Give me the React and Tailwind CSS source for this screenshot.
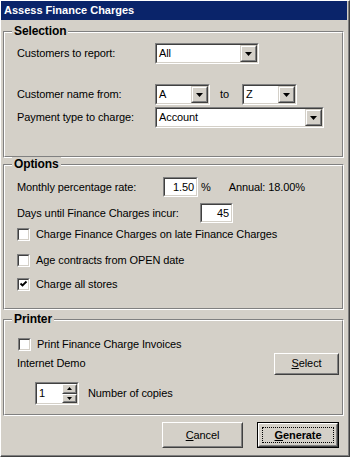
import React from "react";

// classic win2k bevels
const Sunken = ({ className = "", inner = "bg-white", children }) => (
  <div className={`border border-t-[#808080] border-l-[#808080] border-r-white border-b-white ${className}`}>
    <div className={`h-full w-full border border-t-[#404040] border-l-[#404040] border-r-[#d4d0c8] border-b-[#d4d0c8] ${inner}`}>
      {children}
    </div>
  </div>
);

const Raised = ({ className = "", combo = false, children }) => (
  <div
    className={`bg-[#d4d0c8] border border-r-[#404040] border-b-[#404040] ${
      combo ? "border-t-[#d4d0c8] border-l-[#d4d0c8]" : "border-t-white border-l-white"
    } ${className}`}
  >
    <div
      className={`h-full w-full flex items-center justify-center border border-r-[#808080] border-b-[#808080] ${
        combo ? "border-t-white border-l-white" : "border-t-[#d4d0c8] border-l-[#d4d0c8]"
      }`}
    >
      {children}
    </div>
  </div>
);

const Arrow = ({ up = false, w = 7, h = 4 }) => (
  <svg width={w} height={h} viewBox={`0 0 ${w} ${h}`} className="block">
    {up ? (
      <polygon points={`${w / 2},0 ${w},${h} 0,${h}`} fill="#000" />
    ) : (
      <polygon points={`0,0 ${w},0 ${w / 2},${h}`} fill="#000" />
    )}
  </svg>
);

const Combo = ({ value, className }) => (
  <Sunken className={`h-[21px] ${className}`}>
    <div className="flex h-full">
      <span className="flex-1 flex items-center pl-[2px]">{value}</span>
      <Raised combo className="w-[17px] h-full">
        <Arrow />
      </Raised>
    </div>
  </Sunken>
);

const Check = ({ checked = false, label }) => (
  <div className="flex items-center h-[13px]">
    <Sunken className="w-[13px] h-[13px] shrink-0">
      {checked && (
        <svg width="9" height="9" viewBox="0 0 9 9" className="block">
          <polyline points="1.5,3.5 3.5,5.5 7.5,1.5" fill="none" stroke="#000" strokeWidth="1.8" />
        </svg>
      )}
    </Sunken>
    <span className="ml-[6px]">{label}</span>
  </div>
);

const Group = ({ title, className, children }) => (
  <div className={`relative ml-[2px] mr-[3px] border border-t-[#808080] border-l-[#808080] border-r-white border-b-white ${className}`}>
    <div className="h-full border border-t-white border-l-white border-r-[#808080] border-b-[#808080]">
      {children}
    </div>
    <span className="absolute left-[8px] top-[-8px] bg-[#d4d0c8] px-[2px] text-[12px] font-bold leading-[14px]">
      {title}
    </span>
  </div>
);

export default function App() {
  return (
    <div className="w-[350px] h-[457px] bg-[#d4d0c8] text-black text-[11px] leading-[13px] tracking-[-0.1px] font-['Liberation_Sans',Arial,sans-serif] border border-t-white border-l-white border-r-[#404040] border-b-[#404040]">
      <div className="h-full border-r border-b border-r-[#808080] border-b-[#808080] pr-[1px]">
        <div className="h-[19px] bg-[#0a246a] text-white font-bold flex items-center pl-[3px] tracking-normal">
          Assess Finance Charges
        </div>

        {/* Selection */}
        <Group title="Selection" className="mt-[11px] h-[127px]">
          <div className="pl-[12px] pt-[10px]">
            <div className="flex items-center h-[21px]">
              <span className="w-[138px]">Customers to report:</span>
              <Combo value="All" className="w-[104px]" />
            </div>
            <div className="flex items-center h-[21px] mt-[20px]">
              <span className="w-[138px]">Customer name from:</span>
              <Combo value="A" className="w-[55px]" />
              <span className="ml-[10px] w-[22px]">to</span>
              <Combo value="Z" className="w-[55px]" />
            </div>
            <div className="flex items-center h-[21px] mt-[2px]">
              <span className="w-[138px]">Payment type to charge:</span>
              <Combo value="Account" className="w-[169px]" />
            </div>
          </div>
        </Group>

        {/* Options */}
        <Group title="Options" className="mt-[6px] h-[146px]">
          <div className="pl-[12px] pt-[11px]">
            <div className="flex items-center h-[20px]">
              <span className="w-[146px]">Monthly percentage rate:</span>
              <Sunken className="w-[35px] h-[20px]">
                <div className="h-full flex items-center justify-end pr-[2px]">1.50</div>
              </Sunken>
              <span className="ml-[3px]">%</span>
              <span className="ml-[18px]">Annual: 18.00%</span>
            </div>
            <div className="flex items-center h-[20px] mt-[6px]">
              <span className="w-[183px]">Days until Finance Charges incur:</span>
              <Sunken className="w-[33px] h-[20px]">
                <div className="h-full flex items-center justify-end pr-[2px]">45</div>
              </Sunken>
            </div>
            <div className="mt-[5px]">
              <Check label="Charge Finance Charges on late Finance Charges" />
            </div>
            <div className="mt-[13px]">
              <Check label="Age contracts from OPEN date" />
            </div>
            <div className="mt-[11px]">
              <Check checked label="Charge all stores" />
            </div>
          </div>
        </Group>

        {/* Printer */}
        <Group title="Printer" className="mt-[9px] h-[97px]">
          <div className="pl-[12px] pt-[17px] pr-[3px]">
            <div className="pl-[1px]">
              <Check label="Print Finance Charge Invoices" />
            </div>
            <div className="flex items-center justify-between h-[21px] mt-[2px]">
              <span>Internet Demo</span>
              <Raised className="w-[65px] h-[22px]">
                <span>
                  <span className="underline">S</span>elect
                </span>
              </Raised>
            </div>
            <div className="flex items-center mt-[8px] pl-[18px]">
              <Sunken className="w-[44px] h-[23px]">
                <div className="flex h-full">
                  <span className="flex-1 flex items-center pl-[2px]">1</span>
                  <div className="w-[15px] flex flex-col">
                    <Raised className="flex-1">
                      <Arrow up w={5} h={3} />
                    </Raised>
                    <Raised className="flex-1">
                      <Arrow w={5} h={3} />
                    </Raised>
                  </div>
                </div>
              </Sunken>
              <span className="ml-[9px]">Number of copies</span>
            </div>
          </div>
        </Group>

        {/* buttons */}
        <div className="flex justify-end mt-[6px] mr-[8px] gap-[14px]">
          <Raised className="w-[81px] h-[26px]">
            <span>
              <span className="underline">C</span>ancel
            </span>
          </Raised>
          <div className="w-[82px] h-[26px] border border-black">
            <Raised className="w-full h-full">
              <div className="w-full h-full p-[2px]">
                <div className="w-full h-full border border-dotted border-black flex items-center justify-center font-bold">
                  <span>
                    <span className="underline">G</span>enerate
                  </span>
                </div>
              </div>
            </Raised>
          </div>
        </div>
      </div>
    </div>
  );
}
